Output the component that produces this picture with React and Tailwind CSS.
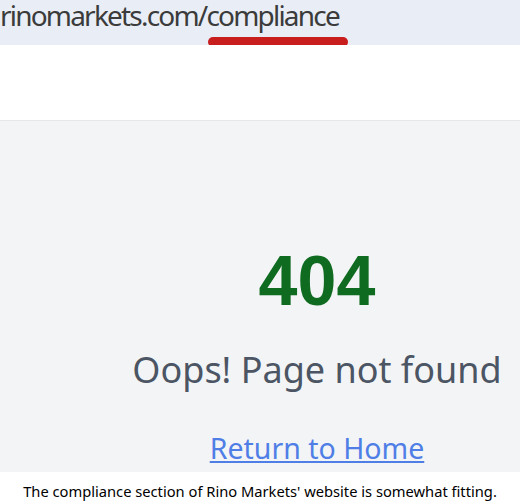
import React from 'react';

const App = () => {
  return (
    <div className="w-[520px] h-[504px] overflow-hidden bg-white flex flex-col">
      {/* address bar */}
      <div className="relative h-[45px] bg-[#e9eef6] overflow-hidden">
        <div className="absolute left-0 top-[-5px] text-[28px] leading-[40px] text-[#3b3b3b] whitespace-nowrap font-['Noto_Sans',sans-serif] tracking-[-1.8px]">
          rinomarkets.com/compliance
        </div>
        <div className="absolute left-[208px] top-[37px] w-[140px] h-[10px] rounded-full bg-[#c81e1e]" />
      </div>
      <div className="h-[76px] bg-white border-b border-[#e5e7eb]" />

      {/* 404 page */}
      <div className="h-[351px] bg-[#f3f4f6] flex flex-col items-center pl-[114px]">
        <div className="mt-[120px] text-[70px] leading-[80px] font-bold text-[#0f6b1f] font-['Liberation_Sans',sans-serif]">
          404
        </div>
        <div className="mt-[26px] text-[36px] leading-[46px] text-[#4b5563] font-['Noto_Sans',sans-serif] whitespace-nowrap">
          Oops! Page not found
        </div>
        <a href="#" className="mt-[35px] text-[28.5px] leading-[40px] text-[#4f7fe6] underline font-['Noto_Sans',sans-serif] whitespace-nowrap">
          Return to Home
        </a>
      </div>

      {/* caption */}
      <div className="flex-1 flex items-center justify-center pt-[6px] text-[14.7px] text-black font-['Noto_Sans',sans-serif] whitespace-nowrap">
        The compliance section of Rino Markets' website is somewhat fitting.
      </div>
    </div>
  );
};

export default App;
